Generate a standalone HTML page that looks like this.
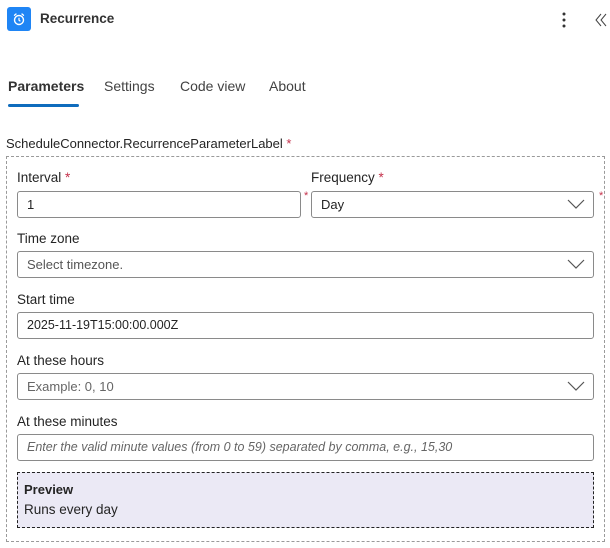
<!DOCTYPE html>
<html><head><meta charset="utf-8"><style>
*{box-sizing:border-box;margin:0;padding:0}
body{width:610px;height:548px;background:#fff;font-family:"Liberation Sans",sans-serif;color:#242424;position:relative;overflow:hidden;font-size:13.5px}
.a{position:absolute;white-space:nowrap}
.inp{position:absolute;border:1px solid #8a8a8a;border-radius:3px;height:27px;background:#fff;padding-left:9px;line-height:25px;font-size:13px}
.star{color:#c4314b}
.chev{position:absolute;right:8px;top:7px}
</style></head><body>
<div class="a" style="left:7px;top:7px;width:24px;height:24px;background:#1f85f5;border-radius:3px"></div>
<svg class="a" style="left:7px;top:7px" width="24" height="24" viewBox="0 0 24 24"><circle cx="12" cy="13" r="4.5" fill="none" stroke="#fff" stroke-width="1.4"/><path d="M12 10.8v2.4l1.4 1" fill="none" stroke="#fff" stroke-width="1.2"/><path d="M7.5 8.3l1.5-1.3M16.5 8.3l-1.5-1.3" stroke="#fff" stroke-width="1.3" stroke-linecap="round"/></svg>
<div class="a" style="left:40px;top:11px;font-size:13.5px;font-weight:bold;color:#333">Recurrence</div>
<svg class="a" style="left:560px;top:11px" width="10" height="18"><circle cx="4" cy="3" r="1.5" fill="#333"/><circle cx="4" cy="9" r="1.5" fill="#333"/><circle cx="4" cy="15" r="1.5" fill="#333"/></svg>
<svg class="a" style="left:594px;top:12px" width="14" height="16"><path d="M7 2L2 8l5 6M12 2L7 8l5 6" fill="none" stroke="#444" stroke-width="1"/></svg>
<div class="a" style="left:8px;top:78px;font-size:14px;font-weight:bold;color:#333">Parameters</div>
<div class="a" style="left:8px;top:104px;width:71px;height:3px;background:#0f6cbd;border-radius:2px"></div>
<div class="a" style="left:104px;top:78px;font-size:14px;color:#424242">Settings</div>
<div class="a" style="left:180px;top:78px;font-size:14px;color:#424242">Code view</div>
<div class="a" style="left:269px;top:78px;font-size:14px;color:#424242">About</div>
<div class="a" style="left:6px;top:136px;font-size:13px">ScheduleConnector.RecurrenceParameterLabel <span class="star">*</span></div>
<div class="a" style="left:6px;top:156px;width:599px;height:386px;border:1px dashed #9a9a9a"></div>

<div class="a" style="left:17px;top:170px">Interval <span class="star">*</span></div>
<div class="inp" style="left:17px;top:191px;width:284px">1</div>
<div class="a star" style="left:304px;top:190px;font-size:11px">*</div>
<div class="a" style="left:311px;top:170px">Frequency <span class="star">*</span></div>
<div class="inp" style="left:311px;top:191px;width:283px">Day<svg class="chev" width="18" height="11"><path d="M1 1l8 8 8-8" fill="none" stroke="#555" stroke-width="1.2"/></svg></div>
<div class="a star" style="left:599px;top:190px;font-size:11px">*</div>

<div class="a" style="left:17px;top:231px">Time zone</div>
<div class="inp" style="left:17px;top:251px;width:577px;color:#555">Select timezone.<svg class="chev" width="18" height="11"><path d="M1 1l8 8 8-8" fill="none" stroke="#555" stroke-width="1.2"/></svg></div>

<div class="a" style="left:17px;top:292px">Start time</div>
<div class="inp" style="left:17px;top:312px;width:577px;font-size:12.5px">2025-11-19T15:00:00.000Z</div>

<div class="a" style="left:17px;top:353px">At these hours</div>
<div class="inp" style="left:17px;top:373px;width:577px;color:#666">Example: 0, 10<svg class="chev" width="18" height="11"><path d="M1 1l8 8 8-8" fill="none" stroke="#555" stroke-width="1.2"/></svg></div>

<div class="a" style="left:17px;top:414px">At these minutes</div>
<div class="inp" style="left:17px;top:434px;width:577px;color:#666;font-style:italic;font-size:12.5px">Enter the valid minute values (from 0 to 59) separated by comma, e.g., 15,30</div>

<div class="a" style="left:17px;top:472px;width:577px;height:56px;background:#ebe9f5;border:1px dashed #222"></div>
<div class="a" style="left:24px;top:482px;font-weight:bold;font-size:13px">Preview</div>
<div class="a" style="left:24px;top:502px">Runs every day</div>
</body></html>
